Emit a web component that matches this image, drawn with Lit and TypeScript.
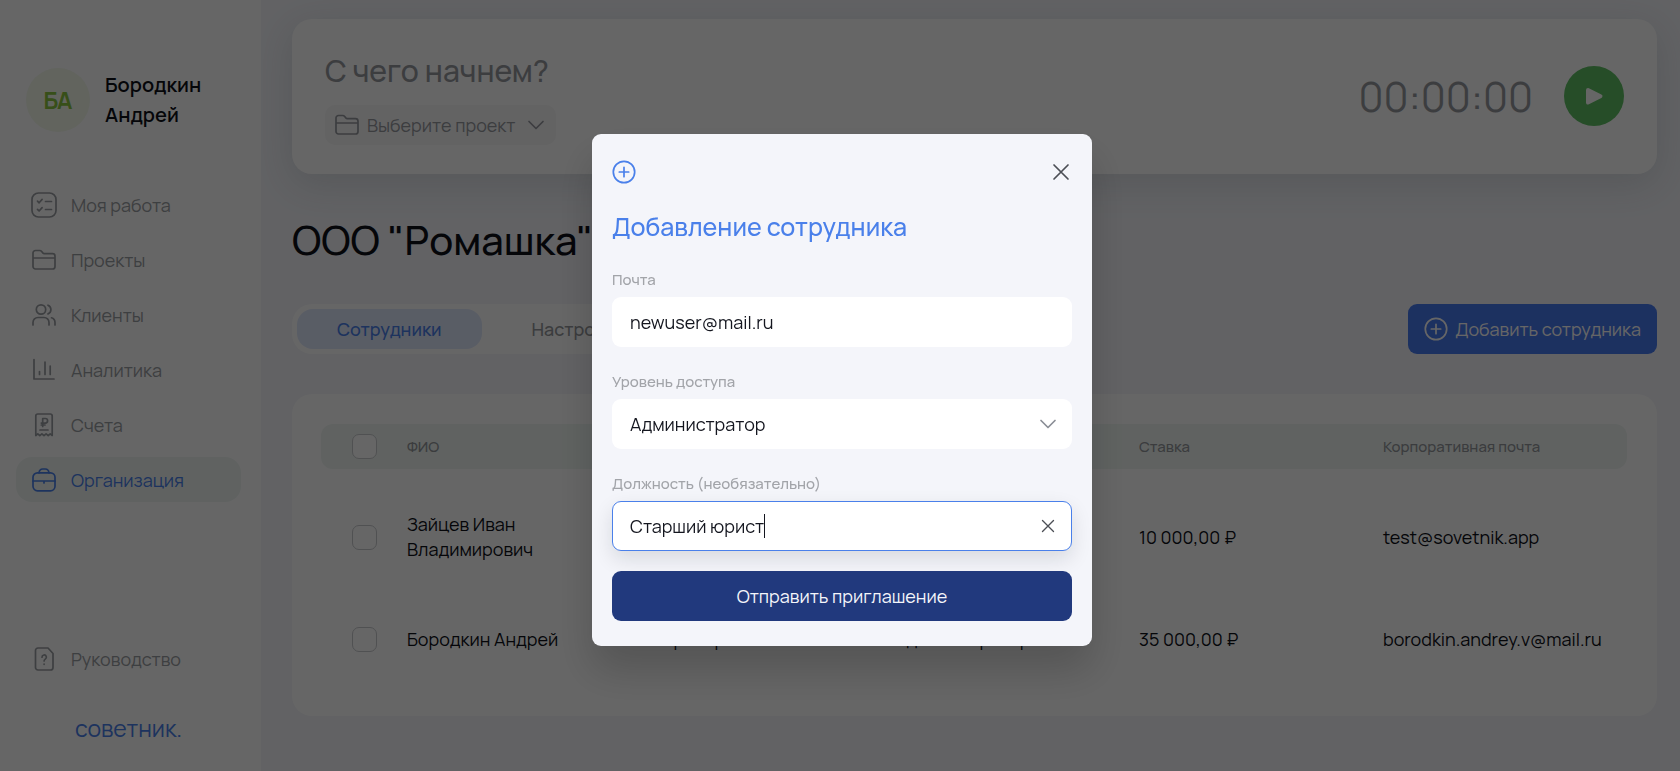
import { LitElement, html, css, svg } from "lit";
import { customElement, property, state } from "lit/decorators.js";
import { classMap } from "lit/directives/class-map.js";

const icons: Record<string, unknown> = {
  work: svg`<rect x="2" y="2" width="24" height="24" rx="6.5"/><path d="M7.5 10.2l1.6 1.6 3-3.4M7.5 18.4l1.6 1.6 3-3.4M15.5 10.5h6M15.5 18.5h6"/>`,
  folder: svg`<path d="M3 12V7a2.500 2.500 0 0 1 2.500-2.500h4.200c.8 0 1.500.4 2 1l1.300 1.600c.3.4.7.6 1.200.6h8.300A2.500 2.500 0 0 1 25 10.200v10.300a2.500 2.500 0 0 1-2.500 2.500h-17A2.500 2.500 0 0 1 3 20.500V12h22"/>`,
  people: svg`<circle cx="11" cy="8.500" r="4.700"/><path d="M3 24v-2.500a5 5 0 0 1 5-5h6a5 5 0 0 1 5 5V24M18 4.200a4.700 4.700 0 0 1 0 8.700M21.500 16.800a5 5 0 0 1 3.500 4.700V24"/>`,
  chart: svg`<path d="M4 3.500V23h20M9.500 15.500V18.500M15 6v12.500M20.200 10v8.500"/>`,
  receipt: svg`<path d="M5.800 24.500V5a2 2 0 0 1 2-2h12.400a2 2 0 0 1 2 2v19.500l-2-1.700-2 1.900-2.100-1.900-2.100 1.900-2.100-1.900-2.100 1.900-2-1.900zM12.700 15.500V7.500h2.600a2.300 2.300 0 0 1 0 4.600h-4M11.300 14h3.700M10 19h8"/>`,
  bag: svg`<rect x="3" y="6.800" width="22" height="18" rx="4.500"/><path d="M9 6.800c.3-2.300 1.700-3.800 3.700-3.800h2.600c2 0 3.400 1.500 3.700 3.800M3 15h22M14 15v2"/>`,
  guide: svg`<path d="M8 3h10l5 5.500v14a2.500 2.500 0 0 1-2.500 2.500H8a2.500 2.500 0 0 1-2.500-2.500v-17A2.500 2.500 0 0 1 8 3z"/><path d="M12 12.200a2.200 2.200 0 1 1 3.300 1.900c-.8.500-1.200.9-1.200 1.800M14.100 19v.3"/>`,
  plus: svg`<circle cx="14" cy="14" r="10.700"/><path d="M14 9.300v9.400M9.300 14h9.400"/>`,
  close: svg`<path d="M7 7l14 14M21 7L7 21"/>`,
  down: svg`<path d="M7 10.500l7 7 7-7"/>`,
};

@customElement("ui-icon")
class UiIcon extends LitElement {
  @property() name = "";
  static styles = css`
    :host { display: block; flex: none; width: 28px; height: 28px; }
    .glyph {
      display: block; width: 100%; height: 100%; fill: none; stroke: currentColor;
      stroke-width: 1.7; stroke-linecap: round; stroke-linejoin: round;
    }
  `;
  render() {
    return html`<svg class="glyph" viewBox="0 0 28 28" aria-hidden="true">${icons[this.name]}</svg>`;
  }
}

const base = css`
  * { box-sizing: border-box; }
  button, input, select { font: inherit; color: inherit; border: 0; background: none; margin: 0; padding: 0; outline: none; }
  button { cursor: pointer; }
  select { appearance: none; cursor: pointer; }
  a { color: inherit; text-decoration: none; }
  h1, h2, p { margin: 0; }
`;

@customElement("side-bar")
class SideBar extends LitElement {
  private items = [
    ["work", "Моя работа"],
    ["folder", "Проекты"],
    ["people", "Клиенты"],
    ["chart", "Аналитика"],
    ["receipt", "Счета"],
    ["bag", "Организация"],
  ];
  static styles = [base, css`
    :host {
      display: flex; flex-direction: column; background: #fff; color: #9a9da2;
      padding: 68px 20px 28px 16px; font-size: 18px; line-height: 24px;
    }
    .user { display: flex; align-items: center; gap: 15px; padding-left: 10px; margin-bottom: 50px; }
    .avatar {
      display: grid; place-items: center; width: 64px; height: 64px; border-radius: 50%;
      background: #f4faec; color: #8bc53f; font-size: 23px; font-weight: 700;
    }
    .name { width: 110px; color: #0d0f18; font-size: 20px; line-height: 30px; font-weight: 600; }
    .nav { display: flex; flex-direction: column; gap: 10px; }
    .link { display: flex; align-items: center; gap: 13px; height: 45px; padding-left: 14px; border-radius: 16px; }
    .link.active { background: #eff6f3; color: #4a80ea; }
    .foot { margin-top: auto; display: flex; flex-direction: column; gap: 32px; }
    .brand { padding-left: 59px; color: #4a80ea; font-size: 23px; line-height: 30px; font-weight: 400; }
  `];
  render() {
    return html`
      <div class="user"><span class="avatar">БА</span><p class="name">Бородкин Андрей</p></div>
      <nav class="nav">
        ${this.items.map(([icon, label]) => html`
          <a href="#" class=${classMap({ link: true, active: icon === "bag" })}><ui-icon name=${icon}></ui-icon>${label}</a>`)}
      </nav>
      <div class="foot">
        <a href="#" class="link"><ui-icon name="guide"></ui-icon>Руководство</a>
        <a href="#" class="brand">советник.</a>
      </div>`;
  }
}

@customElement("timer-panel")
class TimerPanel extends LitElement {
  static styles = [base, css`
    :host {
      display: flex; align-items: center; gap: 31px; background: #fff; border-radius: 20px;
      padding: 28px 33px 29px; box-shadow: 0 10px 36px rgba(70, 90, 95, 0.16); color: #96999f;
    }
    .task { flex: 1; min-width: 0; display: flex; flex-direction: column; align-items: flex-start; gap: 10px; }
    .what { width: 100%; font-size: 30px; line-height: 48px; height: 48px; font-weight: 500; }
    .what::placeholder { color: #96999f; opacity: 1; }
    .project {
      display: grid; grid-template-columns: auto 1fr auto; align-items: center; gap: 6px;
      height: 40px; padding: 0 6px 0 8px; border-radius: 10px; background: #f7f7f8; font-size: 18px;
    }
    .time { font-size: 41px; line-height: 52px; }
    .play { display: grid; place-items: center; width: 60px; height: 60px; border-radius: 50%; background: #5fc064; }
    .triangle { width: 20px; height: 20px; fill: #fff; stroke: #fff; stroke-width: 4; stroke-linejoin: round; }
  `];
  render() {
    return html`
      <div class="task">
        <input class="what" aria-label="Задача" placeholder="С чего начнем?" />
        <div class="project">
          <ui-icon name="folder"></ui-icon>
          <select aria-label="Проект"><option>Выберите проект</option></select>
          <ui-icon name="down"></ui-icon>
        </div>
      </div>
      <span class="time">00:00:00</span>
      <button class="play" aria-label="Запустить">
        <svg class="triangle" viewBox="0 0 20 20"><path d="M4 4l12.500 6.200L4 16.500z"/></svg>
      </button>`;
  }
}

@customElement("staff-table")
class StaffTable extends LitElement {
  private heads = ["ФИО", "Должность", "Уровень доступа", "Ставка", "Корпоративная почта"];
  private rows = [
    ["Зайцев Иван Владимирович", "Юрист", "Сотрудник", "10 000,00 ₽", "test@sovetnik.app"],
    ["Бородкин Андрей", "Партнер", "Администратор", "35 000,00 ₽", "borodkin.andrey.v@mail.ru"],
  ];
  static styles = [base, css`
    :host { display: block; background: #fff; border-radius: 20px; padding: 30px 30px 26px 29px; }
    .table { width: 100%; table-layout: fixed; border-spacing: 0; font-size: 18px; line-height: 25px; color: #0d0f18; }
    .check { width: 86px; padding: 0 0 0 31px; }
    .head { height: 45px; padding: 0; background: #eff6f3; text-align: left; font-size: 15px; font-weight: 500; color: #94979c; }
    .head.check { padding-left: 31px; border-radius: 12px 0 0 12px; }
    .head:last-child { border-radius: 0 12px 12px 0; }
    .rows::before { content: ""; display: block; height: 17px; }
    .cell { height: 102px; padding: 0 20px 0 0; }
    .cell.check { padding: 0 0 0 31px; }
    .cell:last-child { padding-right: 0; }
    .box {
      appearance: none; display: block; width: 25px; height: 25px; border: 1px solid #c8cacd;
      border-radius: 7px; background: #fff;
    }
  `];
  render() {
    return html`
      <table class="table">
        <thead><tr>
          <th class="head check"><input class="box" type="checkbox" aria-label="Выбрать всех" /></th>
          ${this.heads.map((h) => html`<th class="head">${h}</th>`)}
        </tr></thead>
        <tbody class="rows">
          ${this.rows.map((r) => html`<tr>
            <td class="cell check"><input class="box" type="checkbox" aria-label=${r[0]} /></td>
            ${r.map((c) => html`<td class="cell">${c}</td>`)}
          </tr>`)}
        </tbody>
      </table>`;
  }
}

@customElement("invite-dialog")
class InviteDialog extends LitElement {
  @state() private post = "Старший юрист";
  static styles = [base, css`
    :host {
      position: fixed; inset: 0; display: grid; place-items: center; padding: 8px 0 0 4px;
      background: rgba(0, 0, 0, 0.6);
    }
    .modal {
      display: flex; flex-direction: column; gap: 25px; width: 500px; max-width: 100%; padding: 24px 20px 25px;
      border-radius: 9px; background: #f4f5fa; box-shadow: 0 24px 40px rgba(0, 0, 0, 0.18);
    }
    .top { display: flex; justify-content: space-between; align-items: center; color: #4a80ea; }
    .plus { margin-left: -2px; }
    .close { display: block; margin-right: -3px; color: #4b4e55; }
    .title { padding-bottom: 2px; color: #4a80ea; font-size: 25px; line-height: 32px; font-weight: 500; }
    .field { display: flex; flex-direction: column; gap: 7px; }
    .label { color: #a2a4a9; font-size: 15px; line-height: 20px; font-weight: 500; }
    .control {
      display: flex; align-items: center; height: 50px; padding: 0 10px 0 18px; border-radius: 9px;
      background: #fff; color: #14161f; font-size: 18px;
    }
    .text { flex: 1; min-width: 0; height: 100%; }
    .arrow { color: #8b8e96; }
    .control.focused { padding: 0 9px 0 17px; border: 1px solid #4a80ea; box-shadow: 0 8px 20px rgba(20, 25, 35, 0.12); }
    .grow { field-sizing: content; height: 100%; }
    .caret { width: 1px; height: 24px; background: #14161f; }
    .clear { display: grid; place-items: center; width: 28px; height: 28px; margin-left: auto; color: #4b4e55; }
    .small { width: 22px; height: 22px; }
    .last { display: flex; flex-direction: column; gap: 20px; }
    .send { height: 50px; border-radius: 9px; background: #21397d; color: #f4f5fa; font-size: 18px; }
  `];
  render() {
    return html`
      <form class="modal" role="dialog" aria-labelledby="title" @submit=${(e: Event) => e.preventDefault()}>
        <div class="top">
          <ui-icon class="plus" name="plus"></ui-icon>
          <button class="close" type="button" aria-label="Закрыть"><ui-icon name="close"></ui-icon></button>
        </div>
        <h2 class="title" id="title">Добавление сотрудника</h2>
        <div class="field">
          <label class="label" for="mail">Почта</label>
          <div class="control"><input class="text" id="mail" type="email" value="newuser@mail.ru" /></div>
        </div>
        <div class="field">
          <label class="label" for="level">Уровень доступа</label>
          <div class="control">
            <select class="text" id="level"><option>Администратор</option><option>Сотрудник</option></select>
            <ui-icon class="arrow" name="down"></ui-icon>
          </div>
        </div>
        <div class="last">
          <div class="field">
            <label class="label" for="post">Должность (необязательно)</label>
            <div class="control focused">
              <input class="grow" id="post" .value=${this.post}
                @input=${(e: InputEvent) => (this.post = (e.target as HTMLInputElement).value)} />
              <span class="caret"></span>
              <button class="clear" type="button" aria-label="Очистить" @click=${() => (this.post = "")}>
                <ui-icon class="small" name="close"></ui-icon>
              </button>
            </div>
          </div>
          <button class="send">Отправить приглашение</button>
        </div>
      </form>`;
  }
}

@customElement("app-root")
class AppRoot extends LitElement {
  static styles = [base, css`
    :host {
      display: grid; grid-template-columns: 261px minmax(0, 1fr); min-height: 100vh; background: #f4f5fa;
      font-family: Manrope, Inter, sans-serif; color: #0d0f18;
    }
    .main { display: flex; flex-direction: column; padding: 19px 23px 40px 31px; }
    .company { margin: 37px 0 35px; font-size: 40px; line-height: 58px; font-weight: 500; }
    .bar { display: flex; justify-content: space-between; margin-bottom: 40px; font-size: 18px; }
    .tabs { display: flex; gap: 10px; height: 50px; padding: 5px; border-radius: 20px; background: #fff; }
    .tab { padding: 0 40px; border-radius: 16px; color: #94979c; font-weight: 500; }
    .tab.active { background: #dfe8fd; color: #4a80ea; }
    .add {
      display: flex; align-items: center; gap: 5px; height: 50px; padding: 0 16px 0 14px; border-radius: 9px;
      background: #487af0; color: #fff;
    }
  `];
  render() {
    return html`
      <side-bar></side-bar>
      <main class="main">
        <timer-panel></timer-panel>
        <h1 class="company">ООО "Ромашка"</h1>
        <div class="bar">
          <div class="tabs"><button class="tab active">Сотрудники</button><button class="tab">Настройки</button></div>
          <button class="add"><ui-icon name="plus"></ui-icon>Добавить сотрудника</button>
        </div>
        <staff-table></staff-table>
      </main>
      <invite-dialog></invite-dialog>`;
  }
}
